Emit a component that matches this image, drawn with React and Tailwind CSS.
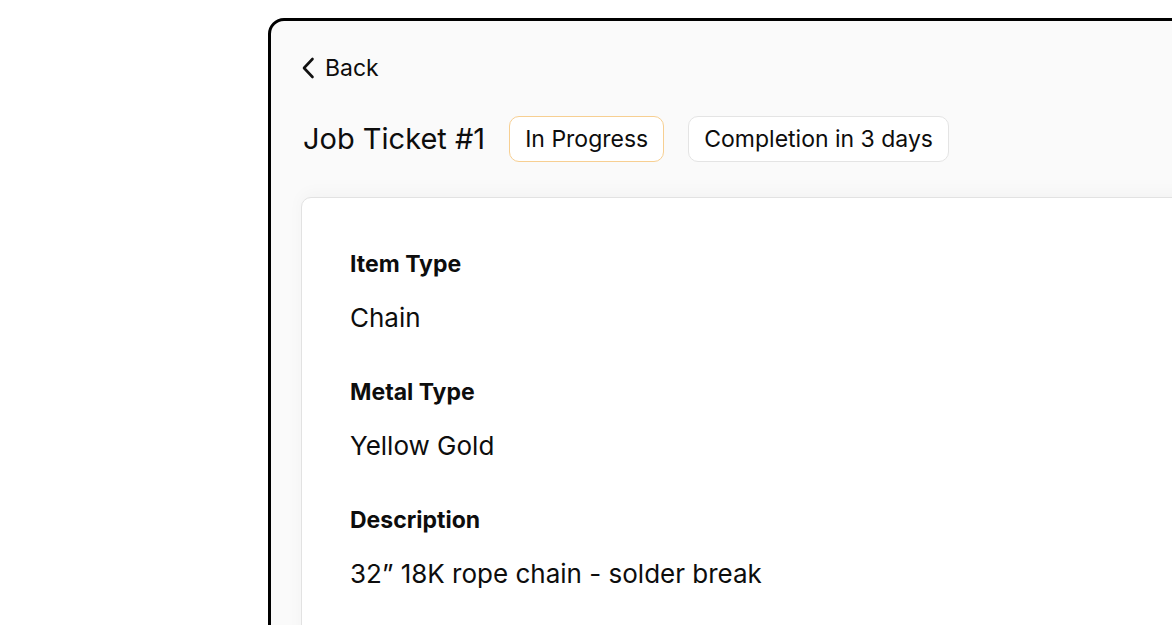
export default function App() {
    const fields = [
        { label: "Item Type", value: "Chain" },
        { label: "Metal Type", value: "Yellow Gold" },
        { label: "Description", value: "32\u201D 18K rope chain - solder break" },
    ]

    return (
        <div
            className="h-[625px] w-full overflow-hidden bg-white text-[#0d0d0d]"
            style={{ fontFamily: "Inter, 'Noto Sans', sans-serif" }}
        >
            <div className="ml-[268px] mt-[18px] h-[700px] w-[1000px] rounded-tl-[16px] border-[3px] border-black bg-[#fafafa] pl-[30px] pt-[33px]">
                <button className="flex h-[28px] items-center gap-[10px] text-[23px] leading-[28px]">
                    <svg width="14" height="22" viewBox="0 0 14 22" fill="none">
                        <path
                            d="M11.5 2 L3 11 L11.5 20"
                            stroke="#111111"
                            strokeWidth="2.6"
                            strokeLinecap="round"
                            strokeLinejoin="round"
                        />
                    </svg>
                    <span>Back</span>
                </button>

                <div className="mt-[34px] flex items-center gap-[24px]">
                    <h1 className="pl-[2px] text-[29px] font-normal leading-[36px]">Job Ticket #1</h1>
                    <span className="flex h-[46px] items-center rounded-[10px] border-[1.5px] border-[#f7cf92] bg-white px-[15px] text-[23px]">
                        In Progress
                    </span>
                    <span className="flex h-[46px] items-center rounded-[10px] border-[1.5px] border-[#e4e4e4] bg-white px-[15px] text-[23px]">
                        Completion in 3 days
                    </span>
                </div>

                <div className="mt-[35px] h-[600px] rounded-tl-[10px] border border-[#e2e2e2] bg-white pl-[48px] pt-[51px] shadow-[0_-4px_16px_rgba(0,0,0,0.03)]">
                    {fields.map((f) => (
                        <div key={f.label} className="mb-[42px]">
                            <p className="text-[23px] font-bold leading-[30px]">{f.label}</p>
                            <p className="mt-[22px] text-[26px] leading-[34px]">{f.value}</p>
                        </div>
                    ))}
                </div>
            </div>
        </div>
    )
}
